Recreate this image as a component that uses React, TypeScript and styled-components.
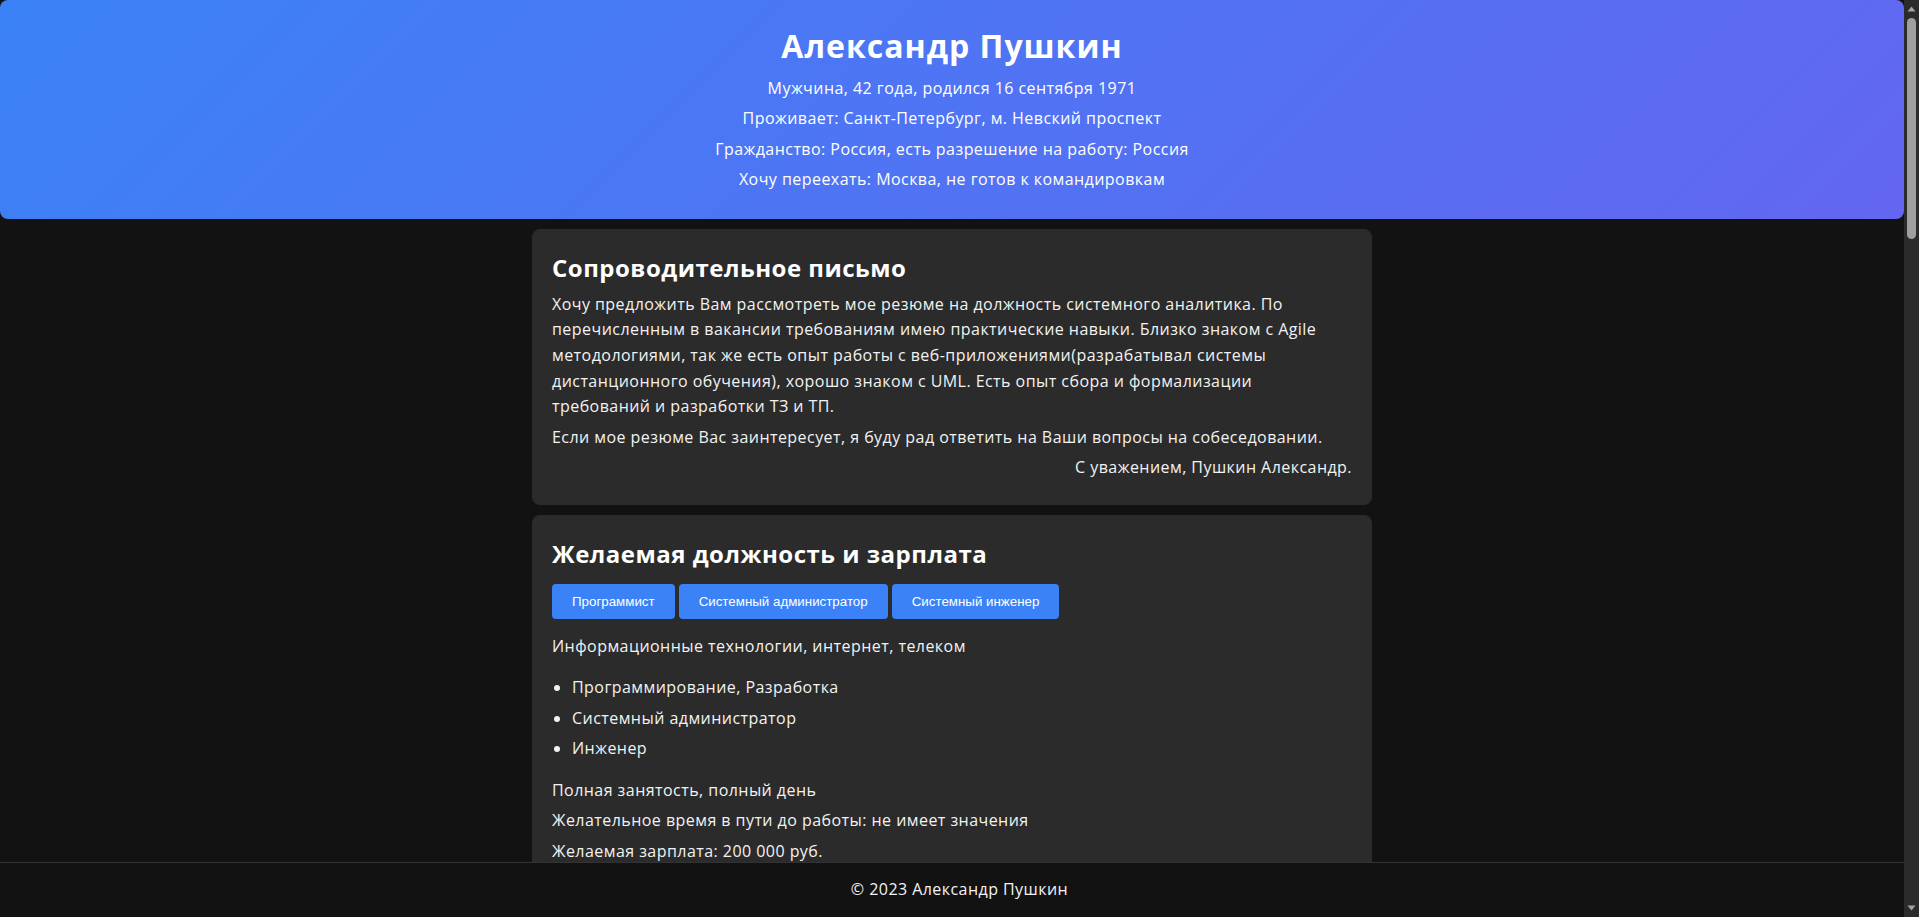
import React from "react";
import styled, { createGlobalStyle } from "styled-components";

const GlobalStyle = createGlobalStyle`
  html, body {
    margin: 0;
    padding: 0;
    height: 100%;
  }
  body {
    overflow: hidden;
    background: #121212;
    color: #f2f2f2;
    font-family: "Open Sans", "Noto Sans", sans-serif;
    font-size: 16px;
    line-height: 1.6;
    letter-spacing: 0.45px;
  }
  * {
    box-sizing: border-box;
  }
`;

const Shell = styled.div`
  display: flex;
  flex-direction: column;
  height: 100vh;
  overflow: hidden;
`;

const Page = styled.div`
  flex: 1;
  min-height: 0;
  display: flex;
  flex-direction: column;
  padding-right: 15px;
`;

const Header = styled.header`
  flex: none;
  background: linear-gradient(135deg, #3b82f6 0%, #6366f1 100%);
  border-radius: 8px;
  padding: 20px 20px 21px;
  text-align: center;
  color: #ffffff;
`;

const Name = styled.h1`
  margin: 0;
  font-size: 32px;
  font-weight: 700;
  line-height: 1.6;
  letter-spacing: 1px;
`;

const Text = styled.p<{ $align?: "left" | "right" }>`
  margin: 4.8px 0;
  text-align: ${(p) => p.$align ?? "inherit"};
`;

const Letter = styled(Text)`
  white-space: nowrap;
`;

const Scroller = styled.div`
  flex: 1;
  min-height: 0;
  overflow: hidden;
`;

const Main = styled.main`
  max-width: 840px;
  margin: 10px auto;
  display: flex;
  flex-direction: column;
  gap: 10px;
`;

const Card = styled.section`
  background: #2b2b2b;
  border-radius: 8px;
  padding: 20px;
`;

const CardTitle = styled.h2`
  margin: 0 0 4.8px;
  font-size: 24px;
  font-weight: 700;
  line-height: 1.6;
  letter-spacing: 0.5px;
  color: #ffffff;
`;

const Tags = styled.div`
  display: flex;
  flex-wrap: wrap;
  gap: 4px;
  margin: 10.6px 0 14.5px;
`;

const Tag = styled.button`
  height: 35px;
  padding: 0 20px;
  border: none;
  border-radius: 4px;
  background: #3b82f6;
  color: #ffffff;
  font-family: "Liberation Sans", Arial, sans-serif;
  font-size: 13.333px;
  font-weight: 500;
  letter-spacing: 0;
  cursor: pointer;
`;

const List = styled.ul`
  margin: 16px 0;
  padding-left: 20px;
`;

const Item = styled.li`
  margin: 4.8px 0;
`;

const Footer = styled.footer`
  flex: none;
  background: #121212;
  border-top: 1px solid #333333;
  padding: 14px 20px;
  text-align: center;
  color: #f2f2f2;
`;

const ScrollTrack = styled.div`
  position: fixed;
  top: 0;
  right: 0;
  bottom: 0;
  z-index: 10;
  width: 15px;
  background: #2b2b2b;
  display: flex;
  flex-direction: column;
  align-items: center;
  padding: 6px 0;
`;

const Thumb = styled.div`
  width: 9px;
  height: 221px;
  margin: 6px 0 auto;
  border-radius: 5px;
  background: #9f9f9f;
`;

const ArrowIcon = ({ down }: { down?: boolean }) => (
  <svg width="9" height="6" viewBox="0 0 9 6" aria-hidden="true">
    <polygon points={down ? "0.5,0.5 8.5,0.5 4.5,5.5" : "0.5,5.5 8.5,5.5 4.5,0.5"} fill="#a3a3a3" />
  </svg>
);

const tags = ["Программист", "Системный администратор", "Системный инженер"];
const specs = ["Программирование, Разработка", "Системный администратор", "Инженер"];

export default function App() {
  return (
    <>
      <GlobalStyle />
      <Shell>
        <Page>
          <Header>
            <Name>Александр Пушкин</Name>
            <Text>Мужчина, 42 года, родился 16 сентября 1971</Text>
            <Text>Проживает: Санкт-Петербург, м. Невский проспект</Text>
            <Text>Гражданство: Россия, есть разрешение на работу: Россия</Text>
            <Text>Хочу переехать: Москва, не готов к командировкам</Text>
          </Header>
          <Scroller>
            <Main>
              <Card>
                <CardTitle>Сопроводительное письмо</CardTitle>
                <Letter>
                  Хочу предложить Вам рассмотреть мое резюме на должность системного аналитика. По
                  <br />
                  перечисленным в вакансии требованиям имею практические навыки. Близко знаком с Agile
                  <br />
                  методологиями, так же есть опыт работы с веб-приложениями(разрабатывал системы
                  <br />
                  дистанционного обучения), хорошо знаком с UML. Есть опыт сбора и формализации
                  <br />
                  требований и разработки ТЗ и ТП.
                </Letter>
                <Text>Если мое резюме Вас заинтересует, я буду рад ответить на Ваши вопросы на собеседовании.</Text>
                <Text $align="right">С уважением, Пушкин Александр.</Text>
              </Card>
              <Card>
                <CardTitle>Желаемая должность и зарплата</CardTitle>
                <Tags>
                  {tags.map((t) => (
                    <Tag key={t} type="button">
                      {t}
                    </Tag>
                  ))}
                </Tags>
                <Text>Информационные технологии, интернет, телеком</Text>
                <List>
                  {specs.map((s) => (
                    <Item key={s}>{s}</Item>
                  ))}
                </List>
                <Text>Полная занятость, полный день</Text>
                <Text>Желательное время в пути до работы: не имеет значения</Text>
                <Text>Желаемая зарплата: 200 000 руб.</Text>
              </Card>
            </Main>
          </Scroller>
        </Page>
        <Footer>© 2023 Александр Пушкин</Footer>
      </Shell>
      <ScrollTrack>
        <ArrowIcon />
        <Thumb />
        <ArrowIcon down />
      </ScrollTrack>
    </>
  );
}
